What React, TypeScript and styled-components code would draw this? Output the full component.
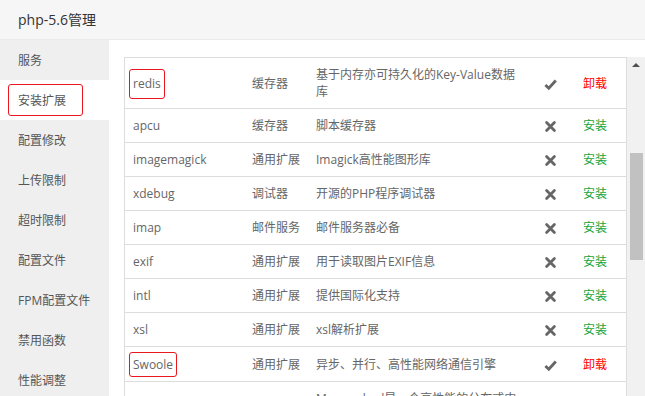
import React from 'react';
import styled, { createGlobalStyle } from 'styled-components';

const GlobalStyle = createGlobalStyle`
  html, body {
    margin: 0;
    padding: 0;
    background: #fff;
  }
  body {
    font-family: 'Open Sans', 'Noto Sans CJK SC', sans-serif;
    font-size: 12px;
  }
`;

interface ExtRow {
  name: string;
  type: string;
  desc: string;
  installed: boolean;
  marked?: boolean;
}

const rows: ExtRow[] = [
  { name: 'redis', type: '缓存器', desc: '基于内存亦可持久化的Key-Value数据库', installed: true, marked: true },
  { name: 'apcu', type: '缓存器', desc: '脚本缓存器', installed: false },
  { name: 'imagemagick', type: '通用扩展', desc: 'Imagick高性能图形库', installed: false },
  { name: 'xdebug', type: '调试器', desc: '开源的PHP程序调试器', installed: false },
  { name: 'imap', type: '邮件服务', desc: '邮件服务器必备', installed: false },
  { name: 'exif', type: '通用扩展', desc: '用于读取图片EXIF信息', installed: false },
  { name: 'intl', type: '通用扩展', desc: '提供国际化支持', installed: false },
  { name: 'xsl', type: '通用扩展', desc: 'xsl解析扩展', installed: false },
  { name: 'Swoole', type: '通用扩展', desc: '异步、并行、高性能网络通信引擎', installed: true, marked: true },
  { name: 'memcached', type: '缓存器', desc: 'Memcached是一个高性能的分布式内存对象缓存系统', installed: false },
];

const menu = ['服务', '安装扩展', '配置修改', '上传限制', '超时限制', '配置文件', 'FPM配置文件', '禁用函数', '性能调整'];

const Page = styled.div`
  height: 100vh;
  overflow: hidden;
  display: flex;
  flex-direction: column;
`;

const TitleBar = styled.div`
  height: 40px;
  box-sizing: border-box;
  padding-left: 18px;
  line-height: 39px;
  font-size: 14px;
  color: #333;
  background: #f6f6f6;
  border-bottom: 1px solid #ebebeb;
  flex-shrink: 0;
`;

const Body = styled.div`
  flex: 1;
  display: flex;
  min-height: 0;
`;

const Sidebar = styled.div`
  width: 109px;
  flex-shrink: 0;
  background: #efefef;
`;

const SideItem = styled.div<{ $active?: boolean }>`
  height: 40px;
  display: flex;
  align-items: center;
  padding-left: 18px;
  color: #555;
  background: ${(p) => (p.$active ? '#fff' : 'transparent')};
`;

// red annotation frame drawn round a label; negative vertical margin keeps row height
const Mark = styled.span<{ $h: number; $padL: number; $padR: number }>`
  display: inline-flex;
  align-items: center;
  box-sizing: border-box;
  height: ${(p) => p.$h}px;
  padding: 0 ${(p) => p.$padR}px 0 ${(p) => p.$padL}px;
  margin: -${(p) => Math.max(0, (p.$h - 17) / 2)}px 0 -${(p) => Math.max(0, (p.$h - 17) / 2)}px -${(p) => p.$padL + 1}px;
  vertical-align: middle;
  border: 1px solid #e8181d;
  border-radius: 3px;
`;

const Content = styled.div`
  flex: 1;
  display: flex;
  padding: 17px 0 0 15px;
  overflow: hidden;
`;

const TableFrame = styled.div`
  width: 503px;
  flex-shrink: 0;
  box-sizing: border-box;
  border: 1px solid #ddd;
  border-bottom: none;
  align-self: flex-start;
`;

const Table = styled.table`
  width: 100%;
  border-collapse: collapse;
  table-layout: fixed;
  color: #666;
`;

const Cell = styled.td<{ $center?: boolean; $padR?: number }>`
  padding: 8px ${(p) => p.$padR ?? 8}px 8px 8px;
  line-height: 17px;
  height: 17px;
  border-bottom: 1px solid #ddd;
  vertical-align: middle;
  text-align: ${(p) => (p.$center ? 'center' : 'left')};
`;

const Action = styled.span<{ $remove?: boolean }>`
  color: ${(p) => (p.$remove ? '#f00' : '#20a53a')};
`;

const StatusIcon = styled.svg`
  width: 13px;
  height: 13px;
  display: inline-block;
  vertical-align: middle;
`;

const ScrollTrack = styled.div`
  flex: 1;
  background: #f1f1f1;
  display: flex;
  flex-direction: column;
  align-items: center;
`;

const ScrollArrow = styled.div`
  margin-top: 6px;
  width: 0;
  height: 0;
  border-left: 4px solid transparent;
  border-right: 4px solid transparent;
  border-bottom: 4px solid #505050;
`;

const ScrollThumb = styled.div`
  margin-top: 86px;
  width: 13px;
  height: 107px;
  background: #c1c1c1;
`;

const Check = () => (
  <StatusIcon viewBox="0 0 13 13">
    <path d="M1.4 7 L4.8 10.2 L11.8 2.6" fill="none" stroke="#666" strokeWidth="2.9" strokeLinejoin="miter" />
  </StatusIcon>
);

const Cross = () => (
  <StatusIcon viewBox="0 0 13 13">
    <path d="M2.6 2.6 L10.4 10.4 M10.4 2.6 L2.6 10.4" fill="none" stroke="#666" strokeWidth="2.8" strokeLinecap="round" />
  </StatusIcon>
);

export default function App() {
  return (
    <Page>
      <GlobalStyle />
      <TitleBar>php-5.6管理</TitleBar>
      <Body>
        <Sidebar>
          {menu.map((m) => (
            <SideItem key={m} $active={m === '安装扩展'}>
              {m === '安装扩展' ? (
                <Mark $h={32} $padL={9} $padR={16}>
                  {m}
                </Mark>
              ) : (
                m
              )}
            </SideItem>
          ))}
        </Sidebar>
        <Content>
          <TableFrame>
            <Table>
              <colgroup>
                <col style={{ width: 119 }} />
                <col style={{ width: 64 }} />
                <col style={{ width: 217 }} />
                <col style={{ width: 50 }} />
                <col style={{ width: 51 }} />
              </colgroup>
              <tbody>
                {rows.map((r) => (
                  <tr key={r.name}>
                    <Cell>
                      {r.marked ? (
                        <Mark $h={r.name === 'redis' ? 30 : 25} $padL={3} $padR={3}>
                          {r.name}
                        </Mark>
                      ) : (
                        r.name
                      )}
                    </Cell>
                    <Cell>{r.type}</Cell>
                    <Cell $padR={4}>{r.desc}</Cell>
                    <Cell $center>{r.installed ? <Check /> : <Cross />}</Cell>
                    <Cell>
                      <Action $remove={r.installed}>{r.installed ? '卸载' : '安装'}</Action>
                    </Cell>
                  </tr>
                ))}
              </tbody>
            </Table>
          </TableFrame>
          <ScrollTrack>
            <ScrollArrow />
            <ScrollThumb />
          </ScrollTrack>
        </Content>
      </Body>
    </Page>
  );
}
